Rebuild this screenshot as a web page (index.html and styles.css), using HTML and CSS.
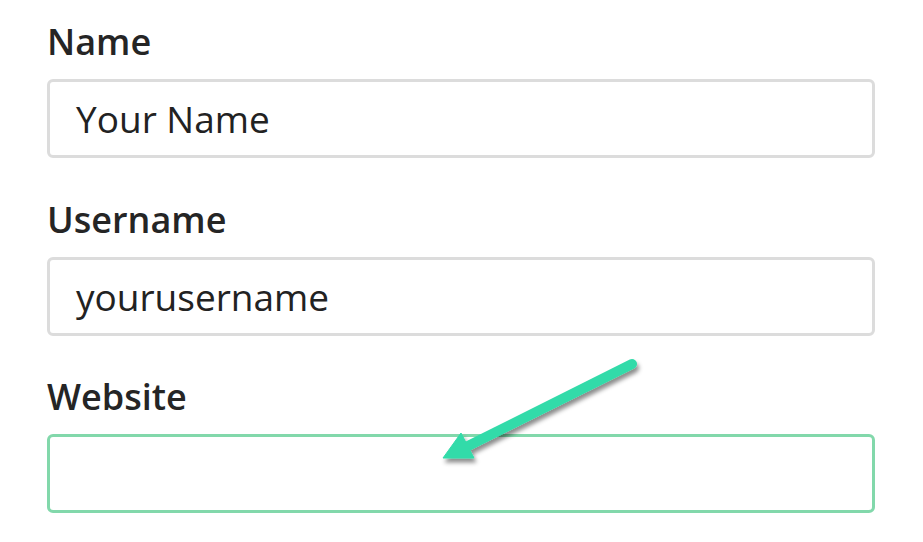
FILE: index.html
```html
<!DOCTYPE html>
<html lang="en">
<head>
<meta charset="utf-8">
<title>Profile form</title>
<link rel="stylesheet" href="styles.css">
</head>
<body>
<form class="form">
  <div class="field">
    <label class="label" for="name">Name</label>
    <div class="input">Your Name</div>
  </div>
  <div class="field">
    <label class="label" for="username">Username</label>
    <div class="input">yourusername</div>
  </div>
  <div class="field">
    <label class="label" for="website">Website</label>
    <div class="input input-focus"></div>
  </div>
</form>
<svg class="arrow" viewBox="0 0 923 542" width="923" height="542" aria-hidden="true">
  <defs>
    <filter id="sh" x="-20%" y="-20%" width="140%" height="140%">
      <feDropShadow dx="2" dy="4" stdDeviation="2.2" flood-color="#000" flood-opacity="0.45"/>
    </filter>
  </defs>
  <g filter="url(#sh)" fill="#31dba9" stroke="#31dba9">
    <line x1="632" y1="364" x2="462" y2="449" stroke-width="10" stroke-linecap="round"/>
    <polygon points="443,458 461,433 474,458" stroke-width="1" stroke-linejoin="round"/>
  </g>
</svg>
</body>
</html>
```
FILE: styles.css
```css
html, body {
  margin: 0;
  padding: 0;
  background: #ffffff;
}
body {
  width: 923px;
  height: 542px;
  overflow: hidden;
  position: relative;
  font-family: "Open Sans", "Noto Sans", sans-serif;
  color: #222222;
}
.form {
  padding: 20px 48px 0 47px;
  display: flex;
  flex-direction: column;
  gap: 39.5px;
}
.field {
  display: flex;
  flex-direction: column;
}
.label {
  font-size: 36px;
  font-weight: 600;
  line-height: 44px;
  color: #252525;
  margin-bottom: 15px;
}
.input {
  box-sizing: border-box;
  height: 79px;
  width: 828px;
  border: 3px solid #dcdcdc;
  border-radius: 6px;
  padding: 0 0 0 26px;
  font-size: 37px;
  font-weight: 400;
  color: #222222;
  display: flex;
  align-items: center;
}
.input-focus {
  border-color: #82d8ab;
}
.arrow {
  position: absolute;
  left: 0;
  top: 0;
  pointer-events: none;
}
```
